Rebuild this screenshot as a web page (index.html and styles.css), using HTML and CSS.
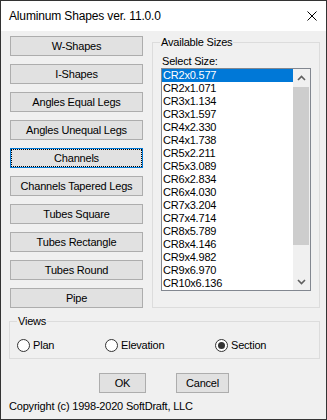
FILE: index.html
```html
<!DOCTYPE html>
<html>
<head>
<meta charset="utf-8">
<link rel="stylesheet" href="styles.css">
</head>
<body>
<div class="window">
  <div class="titlebar">
    <span class="title">Aluminum Shapes ver. 11.0.0</span>
    <svg class="close" width="10" height="10" viewBox="0 0 10 10"><path d="M0.5 0.5 L9.5 9.5 M9.5 0.5 L0.5 9.5" stroke="#000" stroke-width="1" fill="none"/></svg>
  </div>
  <div class="client">
    <div class="main">
      <div class="shapes">
        <button class="btn shape">W-Shapes</button>
        <button class="btn shape">I-Shapes</button>
        <button class="btn shape">Angles Equal Legs</button>
        <button class="btn shape">Angles Unequal Legs</button>
        <button class="btn shape focus">Channels</button>
        <button class="btn shape">Channels Tapered Legs</button>
        <button class="btn shape">Tubes Square</button>
        <button class="btn shape">Tubes Rectangle</button>
        <button class="btn shape">Tubes Round</button>
        <button class="btn shape">Pipe</button>
      </div>
      <fieldset class="group sizes">
        <legend>Available Sizes</legend>
        <div class="label">Select Size:</div>
        <div class="listbox">
          <ul class="items">
            <li class="selected">CR2x0.577</li>
            <li>CR2x1.071</li>
            <li>CR3x1.134</li>
            <li>CR3x1.597</li>
            <li>CR4x2.330</li>
            <li>CR4x1.738</li>
            <li>CR5x2.211</li>
            <li>CR5x3.089</li>
            <li>CR6x2.834</li>
            <li>CR6x4.030</li>
            <li>CR7x3.204</li>
            <li>CR7x4.714</li>
            <li>CR8x5.789</li>
            <li>CR8x4.146</li>
            <li>CR9x4.982</li>
            <li>CR9x6.970</li>
            <li>CR10x6.136</li>
          </ul>
          <div class="scrollbar">
            <div class="arrow"><svg width="9" height="6" viewBox="0 0 9 6"><path d="M1 5 L4.5 1.5 L8 5" stroke="#606060" stroke-width="1.6" fill="none"/></svg></div>
            <div class="track"><div class="thumb"></div></div>
            <div class="arrow"><svg width="9" height="6" viewBox="0 0 9 6"><path d="M1 1 L4.5 4.5 L8 1" stroke="#606060" stroke-width="1.6" fill="none"/></svg></div>
          </div>
        </div>
      </fieldset>
    </div>
    <fieldset class="group views">
      <legend>Views</legend>
      <div class="radios">
        <label class="radio plan"><span class="dot"></span>Plan</label>
        <label class="radio elev"><span class="dot"></span>Elevation</label>
        <label class="radio"><span class="dot checked"></span>Section</label>
      </div>
    </fieldset>
    <div class="actions">
      <button class="btn ok">OK</button>
      <button class="btn cancel">Cancel</button>
    </div>
    <div class="copyright">Copyright (c) 1998-2020 SoftDraft, LLC</div>
  </div>
</div>
</body>
</html>
```
FILE: styles.css
```css
* { box-sizing: border-box; }
html, body { margin: 0; padding: 0; }
body {
  width: 327px;
  height: 420px;
  font-family: "Liberation Sans", Arial, sans-serif;
  font-size: 11px;
  letter-spacing: -0.2px;
  color: #000;
  overflow: hidden;
}
.window {
  width: 327px;
  height: 420px;
  border: 1px solid #333;
  background: #f0f0f0;
  display: flex;
  flex-direction: column;
}
.titlebar {
  height: 30px;
  background: #fff;
  display: flex;
  align-items: center;
  padding-left: 8px;
  padding-right: 9px;
}
.title {
  font-size: 12px;
  letter-spacing: -0.15px;
  font-family: "Liberation Sans", Arial, sans-serif;
}
.close { margin-left: auto; }
.client { flex: 1; display: flex; flex-direction: column; }
.main {
  display: flex;
  padding-top: 5px;
  padding-left: 9px;
  gap: 9px;
}
.shapes {
  display: flex;
  flex-direction: column;
  gap: 8px;
  width: 133px;
}
.btn {
  height: 20px;
  background: #e1e1e1;
  border: 1px solid #adadad;
  font-family: inherit;
  font-size: 11px;
  letter-spacing: -0.2px;
  color: #000;
  padding: 0;
  margin: 0;
  position: relative;
}
.btn.focus { border-color: #0078d7; }
.btn.focus::after {
  content: "";
  position: absolute;
  inset: 0;
  border: 1px dotted #000;
}
.group {
  margin: 0;
  border: 1px solid #dcdcdc;
  min-width: 0;
}
.group legend {
  padding: 0 1px;
  margin-left: -1px;
  line-height: 13px;
  font-size: 11px;
}
.sizes {
  width: 168px;
  padding: 0 8px 15px 8px;
}
.label { margin-top: 6px; line-height: 13px; padding-left: 1px; }
.listbox {
  height: 223px;
  border: 1px solid #828790;
  background: #fff;
  display: flex;
}
.items {
  list-style: none;
  margin: 0;
  padding: 0;
  flex: 1;
}
.items li {
  height: 13px;
  line-height: 13px;
  padding-left: 1px;
}
.items li.selected { background: #0078d7; color: #fff; }
.scrollbar {
  width: 17px;
  background: #f0f0f0;
  display: flex;
  flex-direction: column;
}
.arrow {
  height: 17px;
  display: flex;
  align-items: center;
  justify-content: center;
}
.track { flex: 1; padding: 1px 1px 0 0; }
.thumb { height: 158px; background: #cdcdcd; }
.views {
  width: 311px;
  margin: 7px 0 0 8px;
  padding: 0 7px 6px 7px;
}
.views legend { margin-left: 0; }
.radios { display: flex; margin-top: 11px; height: 13px; }
.radio { display: flex; align-items: center; gap: 3px; line-height: 13px; }
.radio.plan { width: 88px; }
.radio.elev { width: 110px; }
.dot {
  width: 13px;
  height: 13px;
  border: 1px solid #333;
  border-radius: 50%;
  background: #fff;
  display: flex;
  align-items: center;
  justify-content: center;
}
.dot.checked::before {
  content: "";
  width: 7px;
  height: 7px;
  border-radius: 50%;
  background: #333;
}
.actions {
  display: flex;
  margin-top: 14px;
  padding-left: 98px;
  gap: 30px;
}
.ok { width: 47px; }
.cancel { width: 53px; }
.copyright {
  margin-top: 7px;
  padding-left: 8px;
  line-height: 13px;
}
```
